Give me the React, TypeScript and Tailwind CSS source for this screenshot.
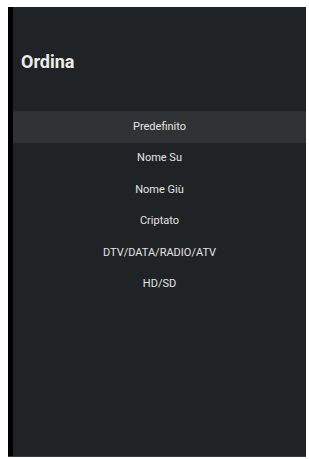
const options = ['Predefinito', 'Nome Su', 'Nome Giù', 'Criptato', 'DTV/DATA/RADIO/ATV', 'HD/SD']

export default function App() {
  return (
    <div className="w-[309px] h-[459px] bg-white pt-[7px] pl-[8px] pr-[3px] pb-[2px] font-['Roboto',sans-serif]">
      <div className="flex h-full bg-[#202325] border-b border-[#3a3d3f]">
        <div className="w-[5px] bg-black" />
        <div className="flex-1 flex flex-col">
          <div className="h-[104px] pt-[44px] pl-[8px]">
            <h1 className="text-[18px] leading-[22px] font-bold text-[#ececec]">Ordina</h1>
          </div>
          <ul className="flex flex-col">
            {options.map((o, i) => (
              <li
                key={o}
                className={`h-[31.5px] flex items-center justify-center text-[11px] text-[#e4e4e4] ${
                  i === 0 ? 'bg-[#303335]' : ''
                }`}
              >
                {o}
              </li>
            ))}
          </ul>
        </div>
      </div>
    </div>
  )
}
